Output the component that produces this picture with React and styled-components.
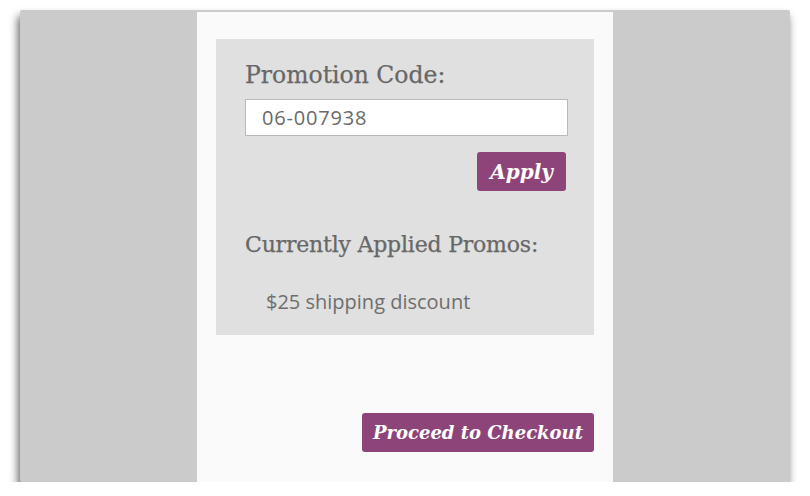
import styled, { createGlobalStyle } from 'styled-components'

const GlobalStyle = createGlobalStyle`
  html, body {
    margin: 0;
    padding: 0;
    background: #ffffff;
  }
`

const Frame = styled.div`
  width: 770px;
  height: 470px;
  margin: 10px 0 0 20px;
  padding-top: 2px;
  background: #cbcbcb;
  border-radius: 2px;
  box-shadow: -2px 6px 8px rgba(0, 0, 0, 0.62);
  display: flex;
  justify-content: center;
`

const Column = styled.div`
  width: 416px;
  background: #fafafa;
  padding: 27px 19px 0;
  box-sizing: border-box;
  display: flex;
  flex-direction: column;
`

const PromoBox = styled.div`
  background: #e0e0e0;
  padding: 21px 26px 20px 29px;
  display: flex;
  flex-direction: column;
`

const Heading = styled.div`
  font-family: 'DejaVu Serif', 'Liberation Serif', serif;
  font-size: ${({ $size }) => $size}px;
  letter-spacing: ${({ $track }) => $track || 0}px;
  line-height: 30px;
  color: #676767;
  -webkit-text-stroke: 0.25px #676767;
  margin-top: ${({ $gap }) => $gap || 0}px;
`

const CodeInput = styled.input`
  margin-top: 9px;
  width: 323px;
  height: 37px;
  box-sizing: border-box;
  border: 1px solid #b9b9b9;
  background: #ffffff;
  padding: 0 16px;
  font-family: 'Open Sans', 'Liberation Sans', sans-serif;
  font-size: 20px;
  letter-spacing: 0.8px;
  color: #6a6a6a;
  outline: none;
`

const ButtonRow = styled.div`
  display: flex;
  justify-content: flex-end;
  margin-top: ${({ $gap }) => $gap}px;
  padding-right: ${({ $inset }) => $inset || 0}px;
`

const ActionButton = styled.button`
  height: 39px;
  width: ${({ $width }) => $width}px;
  border: none;
  border-radius: 3px;
  background: #8d4579;
  color: #ffffff;
  font-family: 'DejaVu Serif', 'Liberation Serif', serif;
  font-style: italic;
  font-weight: bold;
  font-size: ${({ $size }) => $size || 20}px;
  padding: 0;
  cursor: pointer;
  white-space: nowrap;
`

const AppliedPromo = styled.div`
  margin-top: 29px;
  padding-left: 21px;
  font-family: 'Open Sans', 'Liberation Sans', sans-serif;
  font-size: 20px;
  line-height: 26px;
  color: #6e6e6e;
`

export default function App() {
  return (
    <>
      <GlobalStyle />
      <Frame>
        <Column>
          <PromoBox>
            <Heading $size={23.5}>Promotion Code:</Heading>
            <CodeInput defaultValue="06-007938" />
            <ButtonRow $gap={16} $inset={2}>
              <ActionButton $width={89}>Apply</ActionButton>
            </ButtonRow>
            <Heading $size={22} $track={-0.2} $gap={39}>Currently Applied Promos:</Heading>
            <AppliedPromo>$25 shipping discount</AppliedPromo>
          </PromoBox>
          <ButtonRow $gap={78}>
            <ActionButton $width={232} $size={18}>Proceed to Checkout</ActionButton>
          </ButtonRow>
        </Column>
      </Frame>
    </>
  )
}
